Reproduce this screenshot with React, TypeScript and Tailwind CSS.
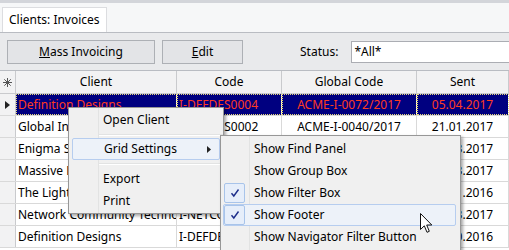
import React from 'react';

const rows = [
  { client: 'Definition Designs', code: 'I-DEFDES0004', global: 'ACME-I-0072/2017', sent: '05.04.2017' },
  { client: 'Global Insurance Group', code: 'I-GLOINS0002', global: 'ACME-I-0040/2017', sent: '21.01.2017' },
  { client: 'Enigma Systems', code: 'I-ENISYS0003', global: 'ACME-I-0061/2017', sent: '18.03.2017' },
  { client: 'Massive Dynamic', code: 'I-MASDYN0001', global: 'ACME-I-0055/2017', sent: '06.03.2017' },
  { client: 'The Lighthouse Company', code: 'I-THELIG0002', global: 'ACME-I-0031/2016', sent: '16.11.2016' },
  { client: 'Network Community Technologies', code: 'I-NETCOM0005', global: 'ACME-I-0066/2017', sent: '23.03.2017' },
  { client: 'Definition Designs', code: 'I-DEFDES0003', global: 'ACME-I-0029/2016', sent: '11.10.2016' },
];

const cols = 'grid grid-cols-[16px_161px_105px_135px_92px]';

const Check = () => (
  <div className="w-[21px] h-[20px] border border-[#a8c4ea] rounded-[2px] bg-[#e6eefa] flex items-center justify-center">
    <svg width="10" height="10" viewBox="0 0 10 10">
      <path d="M1.5 5.2 L3.8 8 L8.5 1.5" fill="none" stroke="#1c2d8a" strokeWidth="1.4" />
    </svg>
  </div>
);

export default function App() {
  return (
    <div
      className="relative w-[509px] h-[250px] overflow-hidden bg-white text-[12px] text-black"
      style={{ fontFamily: '"Noto Sans", "Open Sans", sans-serif' }}
    >
      <div className="h-[3px] bg-[#d3d5da]" />
      <div className="h-[30px] bg-[#f6f7f8] border-b border-[#b9bcc2] flex items-end px-[2px]">
        <div className="h-[25px] px-[6px] bg-white border border-b-0 border-[#dcdde0] flex items-center">
          Clients: Invoices
        </div>
      </div>

      <div className="h-[37px] bg-[#e9eaec] flex items-center pl-[7px] gap-[7px]">
        <button className="w-[148px] h-[24px] bg-[#e3e4e7] border border-[#adb0b5] flex items-center justify-center">
          <span><span className="underline">M</span>ass Invoicing</span>
        </button>
        <button className="w-[81px] h-[24px] bg-[#e3e4e7] border border-[#adb0b5] flex items-center justify-center">
          <span><span className="underline">E</span>dit</span>
        </button>
        <span className="ml-[50px] mr-[6px]">Status:</span>
        <div className="flex-1 h-[22px] bg-white border border-[#abadb3] border-r-0 flex items-center pl-[2px]">
          *All*
        </div>
      </div>

      <div className="border-t border-[#b9bcc2]">
        <div className={`${cols} h-[23px] bg-[#f2f2f3] border-b border-[#c9cacd]`}>
          <div className="border-r border-[#c9cacd] flex items-center justify-center">
            <svg width="9" height="9" viewBox="0 0 9 9">
              <g stroke="#555" strokeWidth="1">
                <path d="M4.5 0 V9 M0 4.5 H9 M1.3 1.3 L7.7 7.7 M7.7 1.3 L1.3 7.7" />
              </g>
            </svg>
          </div>
          <div className="border-r border-[#c9cacd] flex items-center justify-center">Client</div>
          <div className="border-r border-[#c9cacd] flex items-center justify-center">Code</div>
          <div className="border-r border-[#c9cacd] flex items-center justify-center">Global Code</div>
          <div className="border-r border-[#c9cacd] flex items-center justify-center">Sent</div>
        </div>
        {rows.map((r, i) => {
          const sel = i === 0;
          const cell = sel
            ? 'bg-[#000080] text-[#ff3b1f] border-r border-[#ffffff] outline-1 outline-dotted outline-[#e8d97a] -outline-offset-1'
            : 'border-r border-[#d9d9d9]';
          return (
            <div key={i} className={`${cols} h-[22px] border-b border-[#d9d9d9]`}>
              <div className="bg-[#f2f2f3] border-r border-[#c9cacd] flex items-center justify-center">
                {sel && (
                  <svg width="5" height="8" viewBox="0 0 5 8">
                    <path d="M0 0 L5 4 L0 8 Z" fill="#222" />
                  </svg>
                )}
              </div>
              <div className={`${cell} flex items-center pl-[2px] whitespace-nowrap overflow-hidden`}>{r.client}</div>
              <div className={`${cell} flex items-center pl-[2px] whitespace-nowrap overflow-hidden`}>{r.code}</div>
              <div className={`${cell} flex items-center justify-center whitespace-nowrap overflow-hidden`}>{r.global}</div>
              <div className={`${cell} flex items-center justify-center whitespace-nowrap overflow-hidden`}>{r.sent}</div>
            </div>
          );
        })}
      </div>

      {/* context menu */}
      <div className="absolute left-[68px] top-[107px] w-[156px] bg-[#f0f0f0] border border-[#979797] shadow-[2px_2px_3px_rgba(0,0,0,0.35)] py-[1px]">
        <div className="absolute left-[29px] top-0 bottom-0 w-px bg-[#e2e3e3]" />
        <div className="relative h-[22px] flex items-center pl-[34px]">Open Client</div>
        <div className="relative h-[7px] ml-[30px] flex items-center">
          <div className="w-full h-[2px] border-t border-[#e2e3e3] border-b border-b-white" />
        </div>
        <div className="relative h-[22px] mx-[3px] flex items-center pl-[31px] bg-[#edf2f9] border border-[#b6cdef] rounded-[2px]">
          Grid Settings
          <svg className="absolute right-[8px] top-[7px]" width="4" height="7" viewBox="0 0 4 7">
            <path d="M0 0 L4 3.5 L0 7 Z" fill="#222" />
          </svg>
        </div>
        <div className="relative h-[8px] ml-[30px] flex items-center">
          <div className="w-full h-[2px] border-t border-[#e2e3e3] border-b border-b-white" />
        </div>
        <div className="relative h-[22px] flex items-center pl-[34px]">Export</div>
        <div className="relative h-[22px] flex items-center pl-[34px]">Print</div>
      </div>

      {/* submenu */}
      <div className="absolute left-[220px] top-[135px] w-[241px] h-[130px] bg-[#f0f0f0] border border-[#979797] shadow-[2px_2px_3px_rgba(0,0,0,0.35)] pt-[2px] px-[2px]">
        <div className="absolute left-[28px] top-0 bottom-0 w-px bg-[#e2e3e3]" />
        {[
          { t: 'Show Find Panel', c: false },
          { t: 'Show Group Box', c: false },
          { t: 'Show Filter Box', c: true },
          { t: 'Show Footer', c: true, h: true },
          { t: 'Show Navigator Filter Button', c: false },
        ].map((it) => (
          <div
            key={it.t}
            className={`relative h-[22px] flex items-center ${it.h ? 'bg-[#edf2f9] border border-[#b6cdef] rounded-[2px] mr-[2px]' : 'border border-transparent'}`}
          >
            <div className="w-[30px] flex items-center">{it.c && <Check />}</div>
            <span>{it.t}</span>
          </div>
        ))}
      </div>

      {/* mouse cursor */}
      <svg className="absolute left-[420px] top-[213px]" width="13" height="21" viewBox="0 0 13 21">
        <path
          d="M0.5 0.5 L0.5 16.5 L4.3 12.8 L7 19.3 L9.3 18.3 L6.7 12 L11.8 12 Z"
          fill="#fff"
          stroke="#111"
          strokeWidth="1"
          strokeLinejoin="round"
        />
      </svg>
    </div>
  );
}
